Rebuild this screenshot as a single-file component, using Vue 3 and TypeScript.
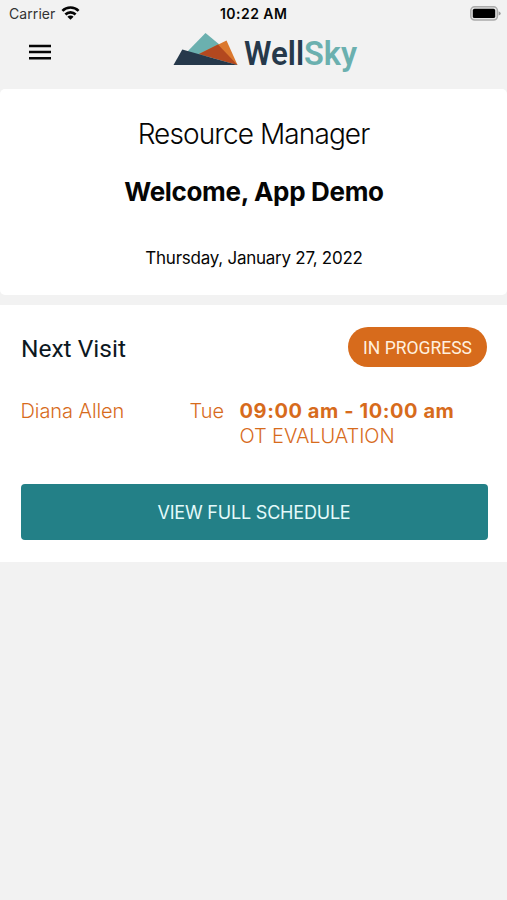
<script setup lang="ts">
interface Visit {
  client: string
  day: string
  time: string
  service: string
  status: string
}

const today = 'Thursday, January 27, 2022'
const user = 'App Demo'
const visit: Visit = {
  client: 'Diana Allen',
  day: 'Tue',
  time: '09:00 am - 10:00 am',
  service: 'OT EVALUATION',
  status: 'IN PROGRESS',
}
</script>

<template>
  <div class="screen">
    <div class="status-bar">
      <div class="carrier">
        <span>Carrier</span>
        <svg class="wifi" width="19" height="14" viewBox="0 0 18 14" aria-hidden="true">
          <g fill="none" stroke="#050505" stroke-width="2.6">
            <path d="M0.9 4.9A11.5 11.5 0 0 1 17.1 4.9" />
            <path d="M3.9 8.5A7.2 7.2 0 0 1 14.1 8.5" />
          </g>
          <path d="M9 13.8L5.9 10.8A4.4 4.4 0 0 1 12.1 10.8Z" fill="#050505" />
        </svg>
      </div>
      <span class="clock">10:22 AM</span>
      <svg class="battery" width="31" height="15" viewBox="0 0 31 15" aria-hidden="true">
        <rect x="0.8" y="0.8" width="26.6" height="13.2" rx="3.8" fill="#e4e4e4" stroke="#ababab" stroke-width="1.5" />
        <rect x="2.8" y="2.7" width="22.4" height="9.4" rx="1.7" fill="#000" />
        <path d="M28.6 5.3Q30.7 6 30.7 7.4T28.6 9.5Z" fill="#999" />
      </svg>
    </div>

    <header class="app-bar">
      <button class="menu" type="button" aria-label="Menu">
        <svg width="22" height="16" viewBox="0 0 22 16" aria-hidden="true">
          <path d="M0 1.9H22M0 8.1H22M0 14.3H22" fill="none" stroke="#050505" stroke-width="2.5" />
        </svg>
      </button>
      <svg class="logo" width="190" height="46" viewBox="0 0 190 46" role="img" aria-label="WellSky">
        <path d="M35.5 3L16 23L40 27L50 15Z" fill="#6bb0af" />
        <path d="M56.5 10.5L29 24L67.5 35Z" fill="#db782e" />
        <path d="M48 14.5L29 24L67.5 35Z" fill="#b3481f" />
        <path d="M12.3 19.5L67.5 35H3.5Z" fill="#26394b" />
        <text x="74" y="35" textLength="60" lengthAdjust="spacingAndGlyphs" class="well">Well</text>
        <text x="134" y="35" textLength="53" lengthAdjust="spacingAndGlyphs" class="sky">Sky</text>
      </svg>
    </header>

    <section class="welcome">
      <div class="product">Resource Manager</div>
      <h1>Welcome, {{ user }}</h1>
      <div class="date">{{ today }}</div>
    </section>

    <section class="next">
      <div class="next-head">
        <h2>Next Visit</h2>
        <span class="badge">{{ visit.status }}</span>
      </div>
      <div class="visit">
        <span class="client">{{ visit.client }}</span>
        <span class="day">{{ visit.day }}</span>
        <div class="slot">
          <strong>{{ visit.time }}</strong>
          <span class="service">{{ visit.service }}</span>
        </div>
      </div>
      <button class="schedule" type="button">VIEW FULL SCHEDULE</button>
    </section>
  </div>
</template>

<style>
body {
  background: #f2f2f2;
}
</style>

<style scoped>
.screen {
  min-height: 900px;
  box-sizing: border-box;
  background: #f2f2f2;
  color: #050505;
  font-family: Inter, "Liberation Sans", sans-serif;
  white-space: nowrap;
}
button {
  font: inherit;
  border: 0;
  padding: 0;
}
.status-bar {
  height: 28px;
  box-sizing: border-box;
  padding: 0 6px 0 9px;
  display: grid;
  grid-template-columns: 211px auto 1fr;
  align-items: center;
  line-height: 28px;
}
.carrier {
  display: flex;
  align-items: center;
  gap: 6px;
  font-size: 14px;
  letter-spacing: 0.08px;
  color: #333;
}
.wifi {
  margin-top: -2px;
}
.clock {
  font-size: 14px;
  font-weight: 600;
  letter-spacing: 0.45px;
}
.battery {
  justify-self: end;
  margin-top: -1px;
}
.app-bar {
  height: 61px;
  display: flex;
  align-items: flex-start;
}
.menu {
  margin: 16px 0 0 29px;
  width: 22px;
  height: 16px;
  background: none;
}
.menu svg {
  display: block;
}
.logo {
  margin: 2px 0 0 119px;
}
.well,
.sky {
  font-family: Roboto, sans-serif;
  font-size: 33px;
  font-weight: 600;
}
.well {
  fill: #26394b;
}
.sky {
  fill: #6bb0af;
}
.welcome {
  height: 206px;
  background: #fff;
  border-radius: 5px;
  text-align: center;
  overflow: hidden;
}
.product {
  margin-top: 27px;
  font-size: 28px;
  line-height: 36px;
  font-weight: 300;
  letter-spacing: -0.9px;
}
h1 {
  margin: 22px 0 0;
  padding-left: 1px;
  font-size: 26px;
  line-height: 36px;
  font-weight: 700;
  letter-spacing: -0.33px;
}
.date {
  margin-top: 36px;
  padding-left: 1px;
  font-size: 17px;
  line-height: 24px;
  letter-spacing: -0.25px;
}
.next {
  margin-top: 10px;
  height: 257px;
  box-sizing: border-box;
  padding: 22px 20px 0;
  background: #fff;
}
.next-head {
  height: 40px;
  display: flex;
  justify-content: space-between;
  align-items: center;
}
h2 {
  margin: 4px 0 0 1px;
  font: 400 24.5px/36px Roboto, sans-serif;
  color: #0c1821;
}
.badge {
  width: 139px;
  height: 40px;
  border-radius: 20px;
  background: #d76b1c;
  color: #fff0df;
  text-align: center;
  font: 400 17.5px/43px Roboto, sans-serif;
}
.visit {
  margin: 32px 0 0 0.5px;
  display: grid;
  grid-template-columns: 169px 50px 1fr;
  color: #d76b1c;
  font-size: 20px;
  line-height: 25px;
}
.client,
.day,
.service {
  font-weight: 350;
  letter-spacing: -0.07px;
}
.slot {
  display: flex;
  flex-direction: column;
}
.slot strong {
  font-weight: 750;
  letter-spacing: 0.58px;
}
.schedule {
  display: block;
  width: 467px;
  height: 56px;
  margin: 35px 0 0 0.5px;
  border-radius: 4px;
  background: #238087;
  color: #e4fafa;
  font-size: 18px;
  line-height: 58px;
  letter-spacing: -0.2px;
}
</style>
